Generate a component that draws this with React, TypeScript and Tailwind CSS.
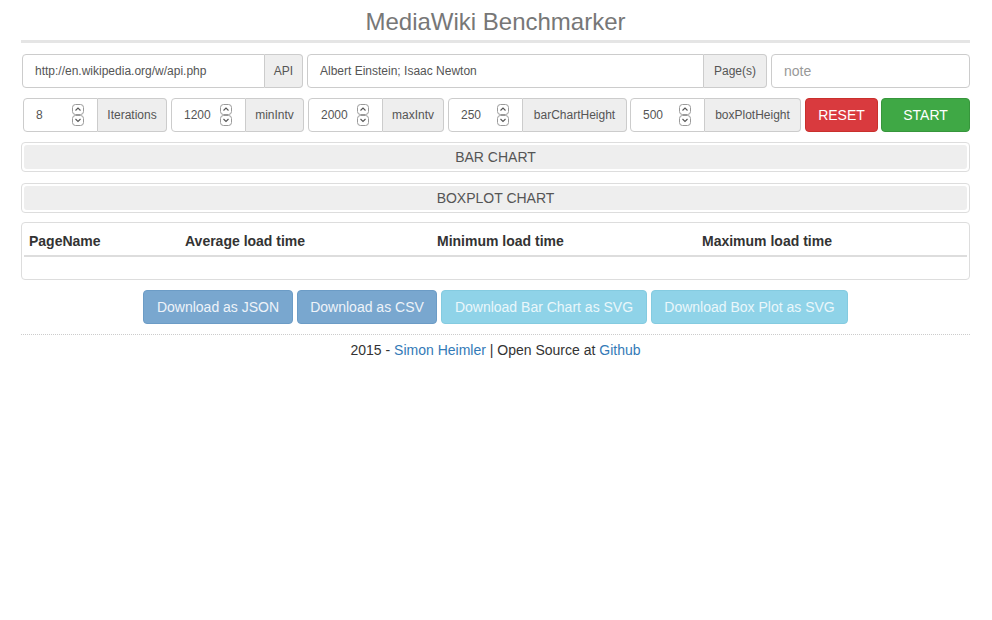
import React from 'react';

const font = { fontFamily: '"Liberation Sans", Arial, sans-serif' };

function Spinner() {
  return (
    <svg width="13" height="22" viewBox="0 0 13 22" className="shrink-0">
      <rect x="0.5" y="0.5" width="11" height="10" rx="3" fill="#fff" stroke="#9a9a9a" />
      <path d="M3.5 6.5 L6 4 L8.5 6.5" fill="none" stroke="#555" strokeWidth="1.1" />
      <rect x="0.5" y="11.5" width="11" height="10" rx="3" fill="#fff" stroke="#9a9a9a" />
      <path d="M3.5 15 L6 17.5 L8.5 15" fill="none" stroke="#555" strokeWidth="1.1" />
    </svg>
  );
}

function NumGroup({ value, label, className }: { value: string; label: string; className: string }) {
  return (
    <div className={`flex h-[34px] shrink-0 ${className}`}>
      <div className="flex items-center w-[75px] shrink-0 pl-[12px] pr-[12px] border border-[#ccc] rounded-l-[4px] bg-white">
        <span className="flex-1 text-[12px] text-[#555]">{value}</span>
        <Spinner />
      </div>
      <div className="flex-1 flex items-center justify-center border border-l-0 border-[#ccc] rounded-r-[4px] bg-[#eee] text-[12px] text-[#555]">
        {label}
      </div>
    </div>
  );
}

function ChartPanel({ title }: { title: string }) {
  return (
    <div className="border border-[#ddd] rounded-[4px] p-[2px]">
      <div className="h-[24px] bg-[#eee] rounded-[3px] flex items-center justify-center text-[14px] text-[#555]">
        {title}
      </div>
    </div>
  );
}

export default function App() {
  return (
    <div className="min-h-screen bg-white" style={font}>
      <div className="mx-[21px] w-[949px]">
        {/* Header */}
        <h1 className="text-center text-[24px] leading-[28px] text-[#777] pt-[8px] pb-[4px] border-b-[3px] border-[#e5e5e5]">
          MediaWiki Benchmarker
        </h1>

        {/* Row 1 */}
        <div className="flex mt-[11px] pl-px gap-[4px]">
          <div className="flex h-[34px] w-[281px]">
            <div className="flex-1 flex items-center pl-[12px] border border-[#ccc] rounded-l-[4px] text-[12px] text-[#555]">
              http://en.wikipedia.org/w/api.php
            </div>
            <div className="w-[38px] flex items-center justify-center border border-l-0 border-[#ccc] rounded-r-[4px] bg-[#eee] text-[12px] text-[#555]">
              API
            </div>
          </div>
          <div className="flex h-[34px] w-[460px]">
            <div className="flex-1 flex items-center pl-[12px] border border-[#ccc] rounded-l-[4px] text-[12px] text-[#555]">
              Albert Einstein; Isaac Newton
            </div>
            <div className="w-[63px] flex items-center justify-center border border-l-0 border-[#ccc] rounded-r-[4px] bg-[#eee] text-[12px] text-[#555]">
              Page(s)
            </div>
          </div>
          <div className="flex-1 h-[34px] flex items-center pl-[12px] border border-[#ccc] rounded-[4px] text-[14px] text-[#999]">
            note
          </div>
        </div>

        {/* Row 2 */}
        <div className="flex mt-[10px] pl-[2px]">
          <NumGroup value="8" label="Iterations" className="w-[144px]" />
          <NumGroup value="1200" label="minIntv" className="w-[133px] ml-[4px]" />
          <NumGroup value="2000" label="maxIntv" className="w-[136px] ml-[4px]" />
          <NumGroup value="250" label="barChartHeight" className="w-[179px] ml-[4px]" />
          <NumGroup value="500" label="boxPlotHeight" className="w-[171px] ml-[3px]" />
          <button className="w-[73px] h-[34px] ml-[4px] rounded-[4px] bg-[#d93a3e] border border-[#c9302c] text-white text-[14px]">
            RESET
          </button>
          <button className="w-[89px] h-[34px] ml-[3px] rounded-[4px] bg-[#3fa845] border border-[#37963c] text-white text-[14px]">
            START
          </button>
        </div>

        {/* Charts */}
        <div className="mt-[10px] flex flex-col gap-[11px]">
          <ChartPanel title="BAR CHART" />
          <ChartPanel title="BOXPLOT CHART" />
        </div>

        {/* Table */}
        <div className="mt-[9px] border border-[#ddd] rounded-[4px] px-[2px] pb-[22px]">
          <div className="flex h-[34px] items-center pt-[4px] border-b-2 border-[#ddd] text-[14px] font-bold text-[#333]">
            <div className="w-[161px] pl-[5px]">PageName</div>
            <div className="w-[252px]">Average load time</div>
            <div className="w-[265px]">Minimum load time</div>
            <div>Maximum load time</div>
          </div>
        </div>

        {/* Download buttons */}
        <div className="flex justify-center gap-[4px] mt-[10px]">
          <div className="h-[34px] w-[150px] flex items-center justify-center rounded-[4px] bg-[#79a7cf] border border-[#6c9cc6] text-[14px] text-[#eef3f9]">
            Download as JSON
          </div>
          <div className="h-[34px] w-[140px] flex items-center justify-center rounded-[4px] bg-[#79a7cf] border border-[#6c9cc6] text-[14px] text-[#eef3f9]">
            Download as CSV
          </div>
          <div className="h-[34px] w-[206px] flex items-center justify-center rounded-[4px] bg-[#8fd3e8] border border-[#84cbe0] text-[14px] text-[#eaf7fb]">
            Download Bar Chart as SVG
          </div>
          <div className="h-[34px] w-[197px] flex items-center justify-center rounded-[4px] bg-[#8fd3e8] border border-[#84cbe0] text-[14px] text-[#eaf7fb]">
            Download Box Plot as SVG
          </div>
        </div>

        {/* Footer */}
        <div className="mt-[10px] border-t border-dotted border-[#ccc] pt-[5px] text-center text-[14px] text-[#333]">
          2015 - <span className="text-[#337ab7]">Simon Heimler</span> | Open Source at{' '}
          <span className="text-[#337ab7]">Github</span>
        </div>
      </div>
    </div>
  );
}
